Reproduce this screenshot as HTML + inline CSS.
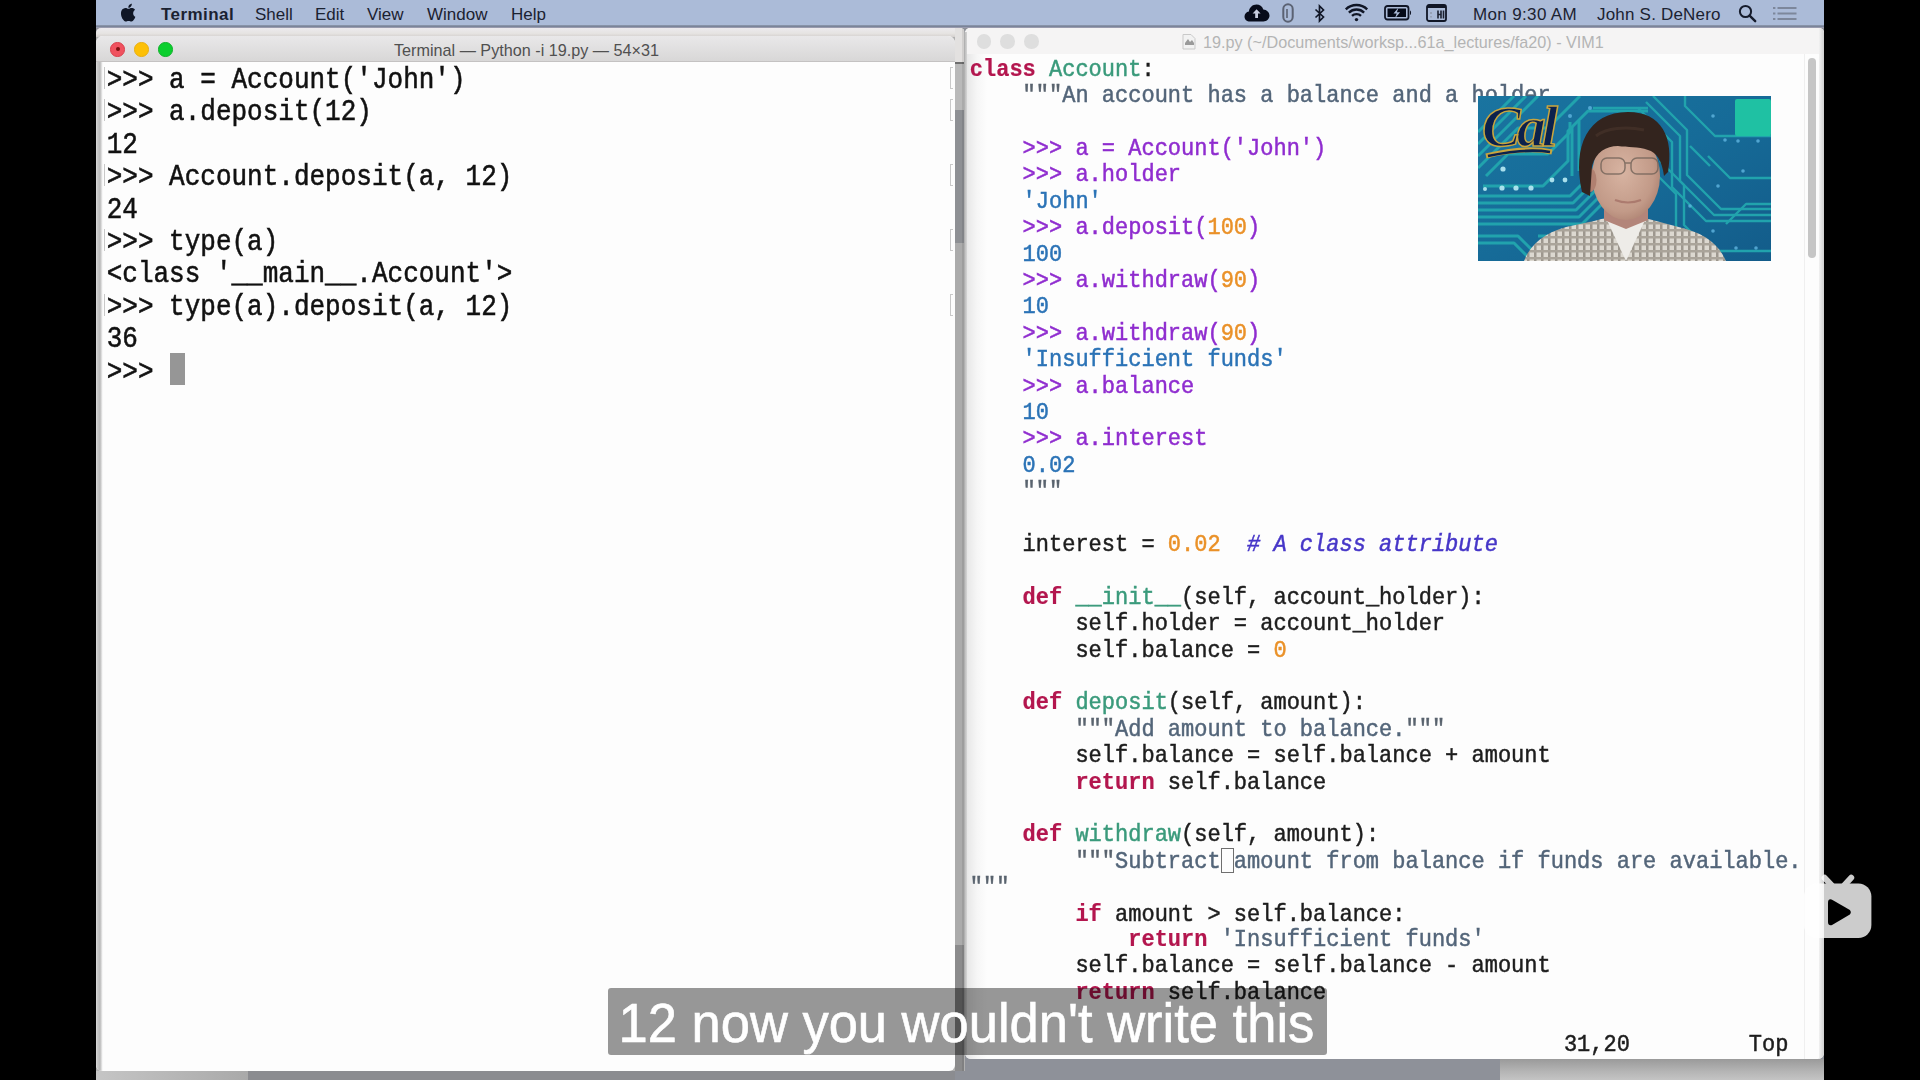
<!DOCTYPE html>
<html><head><meta charset="utf-8">
<style>
*{margin:0;padding:0;box-sizing:border-box}
html,body{width:1920px;height:1080px;overflow:hidden;background:#000}
body{position:relative;font-family:"Liberation Sans",sans-serif}
.a{position:absolute}
#screen{position:absolute;left:96px;top:0;width:1728px;height:1080px;background:#8e9199;overflow:hidden}
#menubar{position:absolute;left:0;top:0;width:1728px;height:25px;background:#abbbd8}
#menuline{position:absolute;left:0;top:25px;width:1728px;height:3px;background:linear-gradient(#8f9ab0,#7a8499 50%,#a9a6b8)}
.mi{position:absolute;top:4.5px;font-size:17px;color:#1b2231;line-height:20px;white-space:nowrap}
/* window behind terminal */
#behind{position:absolute;left:0;top:28px;width:869px;height:1052px;background:#b0b0b0;border-radius:5px 5px 0 0;overflow:hidden}
/* terminal */
#term{position:absolute;left:0;top:36px;width:859px;height:1035px;background:#fdfdfd;border-radius:7px 7px 6px 6px;overflow:hidden}
#termtb{position:absolute;left:0;top:0;width:100%;height:26px;background:linear-gradient(#e9e8e9,#d8d7d7);border-bottom:1px solid #c4c2c2}
#termtitle{position:absolute;left:0;top:5px;width:100%;text-align:center;font-size:16.2px;color:#505050;padding-left:2px}
.tl{position:absolute;top:6px;width:14.5px;height:14.5px;border-radius:50%}
#tterm{position:absolute;left:10.7px;top:29.4px;transform:scaleY(1.1);transform-origin:0 0;font-family:"Liberation Mono",monospace;font-size:26px;line-height:29.41px;color:#111;white-space:pre;-webkit-text-stroke:0.5px #111}
#cursor{position:absolute;left:74px;top:317px;width:14.5px;height:32px;background:#969696}
.mk{position:absolute;left:854px;width:3px;height:22px;border:1px solid #a0a0a0;border-right:0;opacity:.55}
/* vim */
#vim{position:absolute;left:869px;top:28px;width:859px;height:1031px;background:#fdfdfd;border-radius:5px 5px 6px 6px;overflow:hidden}
#vimgrad{position:absolute;left:0;top:26px;width:22px;height:1005px;background:linear-gradient(90deg,#d9d9d9,#e8e8e8 12%,#f6f6f6 55%,rgba(253,253,253,0))}
#vimtb{position:absolute;left:0;top:0;width:100%;height:26px;background:#f5f4f4}
#vimtitle{position:absolute;left:238px;top:5px;font-size:16.2px;color:#b4b4b4;white-space:nowrap}
#tvim{position:absolute;left:4.8px;top:29px;transform:scaleY(1.1);transform-origin:0 0;font-family:"Liberation Mono",monospace;font-size:22px;line-height:23.99px;color:#1d1d1d;white-space:pre;-webkit-text-stroke:0.45px currentColor}
#vtrack{position:absolute;left:854px;top:0;width:5px;height:1031px;background:linear-gradient(90deg,#f2f2f2,#d0d0d0)}
#vthumb{position:absolute;left:842.5px;top:29.5px;width:8.5px;height:200px;border-radius:5px;background:#c6c6c6}
.k{color:#b3164e;font-weight:bold;-webkit-text-stroke:0.2px currentColor}
.f{color:#3a9a7b}
.d{color:#536579}
.q{color:#59636e}
.p{color:#8f2ccf}
.o{color:#2b73b6}
.n{color:#ea9128}
.c{color:#4636c8;font-style:italic}
#sub{position:absolute;left:512px;top:988px;width:719px;height:66.5px;background:rgba(0,0,0,0.405);border-radius:3px}
#subt{position:absolute;left:522.5px;top:992px;font-size:52.5px;line-height:60px;color:#fff;-webkit-text-stroke:0.6px #fff;white-space:nowrap;transform:scaleY(1.04);transform-origin:0 0}
</style></head><body>
<div id="screen">
  <div id="menubar"></div>
  <div id="menuline"></div>
  <svg class="a" style="left:24px;top:3px" width="16" height="19" viewBox="0 0 14 17"><path fill="#0f1626" d="M11.6 9.1c0-2 1.7-3 1.7-3.1-1-1.4-2.4-1.6-2.9-1.6-1.2-.1-2.4.7-3 .7-.6 0-1.6-.7-2.6-.7C3.4 4.4 2.1 5.2 1.4 6.5c-1.4 2.5-.4 6.1 1 8.1.7 1 1.5 2.1 2.5 2 1 0 1.4-.6 2.6-.6s1.5.6 2.6.6c1.1 0 1.8-1 2.4-2 .8-1.1 1.1-2.2 1.1-2.3 0 0-2.1-.8-2-3.2zM9.6 3.1c.5-.7.9-1.6.8-2.5-.8 0-1.7.5-2.3 1.2-.5.6-.9 1.5-.8 2.4.9.1 1.8-.4 2.3-1.1z"/></svg>
  <div class="mi" style="left:65px;font-weight:bold;letter-spacing:0.45px">Terminal</div>
  <div class="mi" style="left:159px">Shell</div>
  <div class="mi" style="left:219px">Edit</div>
  <div class="mi" style="left:271px">View</div>
  <div class="mi" style="left:331px">Window</div>
  <div class="mi" style="left:415px">Help</div>
  <!-- status icons -->
  <svg class="a" style="left:1148px;top:4px" width="26" height="18" viewBox="0 0 26 18"><path fill="#070b1a" d="M6 17.5C2.8 17.5.5 15.3.5 12.4c0-2.6 1.9-4.6 4.4-5C5.5 3.4 8.6.6 12.4.6c3.2 0 5.9 2 6.9 4.8 3.4.1 6.2 2.9 6.2 6.2 0 3.3-2.7 5.9-6.1 5.9z"/><path fill="#c8cde0" d="M12.6 5.2l-4 4.3h2.6v4.6h2.8V9.5h2.6z"/></svg>
  <svg class="a" style="left:1186px;top:3px" width="12" height="20" viewBox="0 0 12 20"><rect x="1.3" y="1.3" width="9.4" height="17.4" rx="4.7" fill="none" stroke="#5b6273" stroke-width="2"/><path d="M5 6v9" stroke="#5b6273" stroke-width="1.6"/></svg>
  <svg class="a" style="left:1218px;top:4px" width="12" height="19" viewBox="0 0 12 19"><path d="M1.5 5.5l8 7.5-4 4V2l4 4-8 7.5" fill="none" stroke="#101626" stroke-width="1.7" stroke-linejoin="miter"/></svg>
  <svg class="a" style="left:1248px;top:3px" width="25" height="19" viewBox="0 0 25 19"><path d="M1.8 6.3a15.5 15.5 0 0 1 21.4 0" fill="none" stroke="#101626" stroke-width="2.4"/><path d="M4.9 9.6a11 11 0 0 1 15.2 0" fill="none" stroke="#101626" stroke-width="2.4"/><path d="M8 12.9a6.5 6.5 0 0 1 9 0" fill="none" stroke="#101626" stroke-width="2.4"/><circle cx="12.5" cy="16.6" r="1.7" fill="#101626"/></svg>
  <svg class="a" style="left:1288px;top:5px" width="30" height="16" viewBox="0 0 30 16"><rect x="1" y="1" width="23.5" height="13.5" rx="2.5" fill="none" stroke="#101626" stroke-width="1.8"/><rect x="3.5" y="3.5" width="18.5" height="8.5" fill="#050a18"/><path d="M26 5.5c1.4.3 1.4 4.2 0 4.5z" fill="#101626"/><path d="M14.5 2.5l-5 6h3.2l-1.8 5 5.2-6.2h-3.2z" fill="#abbbd8"/></svg>
  <svg class="a" style="left:1330px;top:4px" width="21" height="18" viewBox="0 0 21 18"><rect x="1" y="1" width="19" height="16" rx="2" fill="none" stroke="#101626" stroke-width="1.8"/><rect x="1" y="1" width="19" height="3" fill="#101626"/><path d="M12 6.5v8M15 6.5v8M12 10.5h3M17.5 6.5v8" stroke="#1a2030" stroke-width="1.6"/><path d="M5 8v2M5 12v1.5" stroke="#8e96a8" stroke-width="1.4"/></svg>
  <div class="mi" style="left:1377px;letter-spacing:0.35px">Mon 9:30 AM</div>
  <div class="mi" style="left:1501px;letter-spacing:0.2px">John S. DeNero</div>
  <svg class="a" style="left:1642px;top:4px" width="19" height="19" viewBox="0 0 19 19"><circle cx="7.5" cy="7.5" r="5.6" fill="none" stroke="#151b2b" stroke-width="2"/><path d="M11.6 11.6l5.6 5.6" stroke="#151b2b" stroke-width="2.4" stroke-linecap="round"/></svg>
  <svg class="a" style="left:1677px;top:6px" width="24" height="15" viewBox="0 0 24 15"><g fill="#7d879b"><rect x="0" y="1" width="2.4" height="2"/><rect x="0" y="6.5" width="2.4" height="2"/><rect x="0" y="12" width="2.4" height="2"/><rect x="4.5" y="1" width="19" height="2"/><rect x="4.5" y="6.5" width="19" height="2"/><rect x="4.5" y="12" width="19" height="2"/></g></svg>

  <!-- window behind terminal -->
  <div id="behind">
    <div class="a" style="left:0;top:0;width:868px;height:9px;background:linear-gradient(#eceaee,#e6e4e2 60%,#d3cfcd)"></div>
    <div class="a" style="left:859px;top:0;width:9px;height:36px;background:#e3e1e0"></div>
    <div class="a" style="left:859px;top:34px;width:9px;height:2px;background:#6e6e6e"></div>
    <div class="a" style="left:859px;top:36px;width:9px;height:46px;background:#b9b9b9"></div>
    <div class="a" style="left:859px;top:82px;width:9px;height:133px;background:#8e9094"></div>
    <div class="a" style="left:859px;top:215px;width:9px;height:702px;background:#ababab"></div>
    <div class="a" style="left:859px;top:917px;width:9px;height:135px;background:#8b8b8c"></div>
    <div class="a" style="left:866px;top:0;width:2px;height:1052px;background:rgba(0,0,0,0.08)"></div>
    <div class="a" style="left:0;top:1043px;width:152px;height:9px;background:linear-gradient(90deg,#c5c5c5,#a9a9a9)"></div>
    <div class="a" style="left:152px;top:1043px;width:708px;height:9px;background:#8b8c90"></div>
  </div>

  <div id="term">
    <div id="termtb">
      <div class="tl" style="left:14.3px;background:#f0525f;border:1px solid #d8404c"><div class="a" style="left:4.3px;top:4.3px;width:4px;height:4px;border-radius:50%;background:#7c1010"></div></div>
      <div class="tl" style="left:38px;background:#fdc006;border:1px solid #e8ae10"></div>
      <div class="tl" style="left:62.2px;background:#0bcf2e;border:1px solid #10b02a"></div>
      <div id="termtitle">Terminal — Python -i 19.py — 54×31</div>
    </div>
<div id="tterm">&gt;&gt;&gt; a = Account('John')
&gt;&gt;&gt; a.deposit(12)
12
&gt;&gt;&gt; Account.deposit(a, 12)
24
&gt;&gt;&gt; type(a)
&lt;class '__main__.Account'&gt;
&gt;&gt;&gt; type(a).deposit(a, 12)
36
&gt;&gt;&gt; </div>
    <div id="cursor"></div>
    <div class="a" style="left:0;top:26px;width:6.5px;height:1009px;background:linear-gradient(90deg,#dadada 0,#c8c8c8 1.5px,#b9b9b9 4px,#f6f6f6 6.5px)"></div>
    <div class="mk" style="top:31px"></div>
    <div class="a" style="left:8px;top:31px;width:1px;height:22px;background:#c8c8c8"></div><div class="a" style="left:8px;top:63px;width:1px;height:22px;background:#c8c8c8"></div><div class="a" style="left:8px;top:128px;width:1px;height:22px;background:#c8c8c8"></div><div class="a" style="left:8px;top:193px;width:1px;height:22px;background:#c8c8c8"></div><div class="a" style="left:8px;top:258px;width:1px;height:22px;background:#c8c8c8"></div>
    <div class="mk" style="top:63px"></div>
    <div class="mk" style="top:128px"></div>
    <div class="mk" style="top:193px"></div>
    <div class="mk" style="top:258px"></div>
  </div>

  <div id="vim">
    <div id="vimtb">
      <div class="tl" style="left:11.5px;background:#dedede"></div>
      <div class="tl" style="left:35.3px;background:#dedede"></div>
      <div class="tl" style="left:59.3px;background:#dedede"></div>
      <svg class="a" style="left:216px;top:5px" width="16" height="17" viewBox="0 0 16 17"><path d="M2 1.5h8l4 4v10.5H2z" fill="#f2f2f2" stroke="#c9c9c9" stroke-width="1"/><path d="M4 10l3-4 2 3 2-2 2 3v2H4z" fill="#9a9a9a"/></svg>
      <div id="vimtitle">19.py (~/Documents/worksp...61a_lectures/fa20) - VIM1</div>
    </div>
    <div id="vimgrad"></div>
    <div class="a" style="left:0;top:4px;width:2px;height:1023px;background:linear-gradient(90deg,#bdbdbd,#d6d6d6)"></div>
    <div id="vtrack"></div>
    <div id="vthumb"></div>
    <div class="a" style="left:839px;top:26px;width:1px;height:1005px;background:#efefef"></div>
<div id="tvim"><span class="k">class</span> <span class="f">Account</span>:
    <span class="q">"""</span><span class="d">An account has a balance and a holder</span>

    <span class="p">&gt;&gt;&gt; a = Account('John')</span>
    <span class="p">&gt;&gt;&gt; a.holder</span>
    <span class="o">'John'</span>
    <span class="p">&gt;&gt;&gt; a.deposit(</span><span class="n">100</span><span class="p">)</span>
    <span class="o">100</span>
    <span class="p">&gt;&gt;&gt; a.withdraw(</span><span class="n">90</span><span class="p">)</span>
    <span class="o">10</span>
    <span class="p">&gt;&gt;&gt; a.withdraw(</span><span class="n">90</span><span class="p">)</span>
    <span class="o">'Insufficient funds'</span>
    <span class="p">&gt;&gt;&gt; a.balance</span>
    <span class="o">10</span>
    <span class="p">&gt;&gt;&gt; a.interest</span>
    <span class="o">0.02</span>
    <span class="q">"""</span>

    interest = <span class="n">0.02</span>  <span class="c"># A class attribute</span>

    <span class="k">def</span> <span class="f">__init__</span>(self, account_holder):
        self.holder = account_holder
        self.balance = <span class="n">0</span>

    <span class="k">def</span> <span class="f">deposit</span>(self, amount):
        <span class="q">"""</span><span class="d">Add amount to balance.</span><span class="q">"""</span>
        self.balance = self.balance + amount
        <span class="k">return</span> self.balance

    <span class="k">def</span> <span class="f">withdraw</span>(self, amount):
        <span class="q">"""</span><span class="d">Subtract amount from balance if funds are available.</span>
<span class="q">"""</span>
        <span class="k">if</span> amount &gt; self.balance:
            <span class="k">return</span> <span class="d">'Insufficient funds'</span>
        self.balance = self.balance - amount
        <span class="k">return</span> self.balance

                                             31,20         Top</div>
    <div class="a" style="left:255.5px;top:819.5px;width:13.5px;height:25.5px;border:1.5px solid #6f6f6f"></div>
  </div>

  <!-- webcam -->
  <svg class="a" style="left:1382px;top:96px;filter:blur(0.7px)" width="293" height="165" viewBox="0 0 293 165">
    <defs>
      <linearGradient id="bg" x1="0" y1="0" x2="1" y2="1"><stop offset="0" stop-color="#1a74a0"/><stop offset=".5" stop-color="#166b98"/><stop offset="1" stop-color="#135c8a"/></linearGradient>
      <radialGradient id="face" cx=".45" cy=".45" r=".65"><stop offset="0" stop-color="#d8b4a2"/><stop offset=".7" stop-color="#c29a88"/><stop offset="1" stop-color="#a87c6c"/></radialGradient>
      <pattern id="plaid" width="7" height="7" patternUnits="userSpaceOnUse"><rect width="7" height="7" fill="#dcd8d0"/><rect width="2.5" height="7" fill="#9d978e"/><rect width="7" height="2.5" fill="#aaa49a"/></pattern>
    </defs>
    <rect width="293" height="165" fill="url(#bg)"/>
    <g fill="none" stroke="#21a3ad" stroke-width="3" stroke-linejoin="round">
      <path d="M0 100h92l24-24h10"/><path d="M0 107h95l24-24h8"/><path d="M0 114h98l24-24h5"/><path d="M0 121h101l24-24"/><path d="M0 128h104l24-24"/>
      <path d="M0 140h40l20 20h40"/><path d="M0 147h36l18 18"/><path d="M60 140h50l-18 25"/>
      <path d="M0 36l36-36"/><path d="M0 48l48-48"/><path d="M0 60l60-60"/><path d="M0 72l40-40h30l32-32"/>
      <path d="M8 80l22-22h40l22-22v-10"/><path d="M5 90h60l25-25v-30l20-20h60"/>
      <path d="M94 30v50"/><path d="M101 25v50"/>
    </g>
    <g fill="none" stroke="#21a3ad" stroke-width="2.4" stroke-linejoin="round">
      <path d="M175 0l34 34v45l34 34h50"/><path d="M168 6l34 34v45l34 34h57"/><path d="M160 12l34 34v45l34 34h65"/>
      <path d="M182 65l24 24v40l26 26h61"/><path d="M176 76l22 22v40l27 27"/>
      <path d="M207 0v10l30 30h56"/><path d="M230 60l22 22h41"/><path d="M248 128l20-20h25"/>
      <path d="M115 12h55"/><path d="M212 50l20 20"/>
    </g>
    <g fill="#b9ecf5" opacity=".9"><circle cx="25" cy="73" r="2.6"/><circle cx="24" cy="92" r="2.6"/><circle cx="38" cy="92" r="2.6"/><circle cx="53" cy="92" r="2.6"/><circle cx="74" cy="84" r="2.4"/><circle cx="87" cy="84" r="2.4"/><circle cx="7" cy="93" r="2"/></g>
    <g fill="#5fb5e0" opacity=".8"><circle cx="112" cy="12" r="2"/><circle cx="92" cy="20" r="2"/><circle cx="235" cy="20" r="1.8"/><circle cx="247" cy="44" r="1.8"/><circle cx="240" cy="90" r="1.8"/><circle cx="265" cy="75" r="1.8"/><circle cx="212" cy="110" r="1.8"/><circle cx="235" cy="135" r="1.8"/><circle cx="258" cy="152" r="1.8"/><circle cx="278" cy="152" r="1.8"/><circle cx="260" cy="45" r="1.8"/><circle cx="280" cy="45" r="1.8"/></g>
    <rect x="257" y="3" width="36" height="37" rx="2" fill="#1fc1a3"/>
    <text x="4" y="50" font-family="Liberation Serif" font-style="italic" font-weight="bold" font-size="58" fill="#0c214c" stroke="#c8a53e" stroke-width="1.5" letter-spacing="-4">Cal</text>
    <path d="M8 60q40-10 66-4" stroke="#c8a53e" stroke-width="5" fill="none"/><path d="M10 60q38-8 62-4" stroke="#0c214c" stroke-width="2.6" fill="none"/>
    <!-- person -->
    <path d="M46 165c6-16 20-28 42-34l28-6c10-3 18-4 32-4s24 2 34 5l26 7c22 6 34 18 40 32z" fill="url(#plaid)"/>
    <path d="M128 122l20 43 20-43z" fill="#eeece8"/>
    <path d="M126 98h44v26l-22 9-22-9z" fill="#b3857a"/>
    <ellipse cx="148" cy="80" rx="34" ry="44" fill="url(#face)"/>
    <ellipse cx="112" cy="84" rx="6.5" ry="12" fill="#b08070"/>
    <path d="M104 96c-10-46 6-80 46-80 34 0 46 26 40 60l-4 4c-2-16-8-24-16-26-10-4-20-2-30-4-12 0-22 6-26 20l-2 30z" fill="#33241e"/><path d="M118 40c10-8 30-10 48-6" stroke="#4a352b" stroke-width="3" fill="none" opacity=".6"/>
    <g fill="none" stroke="#6d5f55" stroke-width="1.5" opacity=".75"><rect x="123" y="62" width="24" height="16" rx="6"/><rect x="153" y="62" width="27" height="16" rx="6"/><path d="M147 67h6"/></g>
    <path d="M137 104q13 5 26 0" stroke="#9a625a" stroke-width="2" fill="none" opacity=".6"/>
  </svg>

  <!-- subtitle -->
  <div id="sub"></div>
  <div id="subt">12 now you wouldn't write this</div>

  <!-- vim bottom shadow -->
  <div class="a" style="left:1404px;top:1059px;width:324px;height:21px;background:linear-gradient(#9a9a9a,#b5b5b5 60%,#c4c4c4)"></div>
  <div class="a" style="left:859px;top:1071px;width:10px;height:9px;background:#8e9199"></div>
</div>

<!-- bilibili tv logo -->
<svg class="a" style="left:1802px;top:872px" width="72" height="70" viewBox="0 0 72 70"><g opacity="0.8" fill="#fff"><g stroke="#fff" stroke-width="6" stroke-linecap="round"><path d="M22.6 5.8L29.5 13M49.2 5.8L42.5 13"/></g><rect x="2" y="11.5" width="67.4" height="54.5" rx="13"/></g><path d="M26 30.5c0-3 2-4 4.5-2.6l16.5 9.6c2.4 1.4 2.4 4.2 0 5.6l-16.5 9.6c-2.5 1.4-4.5.4-4.5-2.6z" fill="#000"/></svg>
</body></html>
